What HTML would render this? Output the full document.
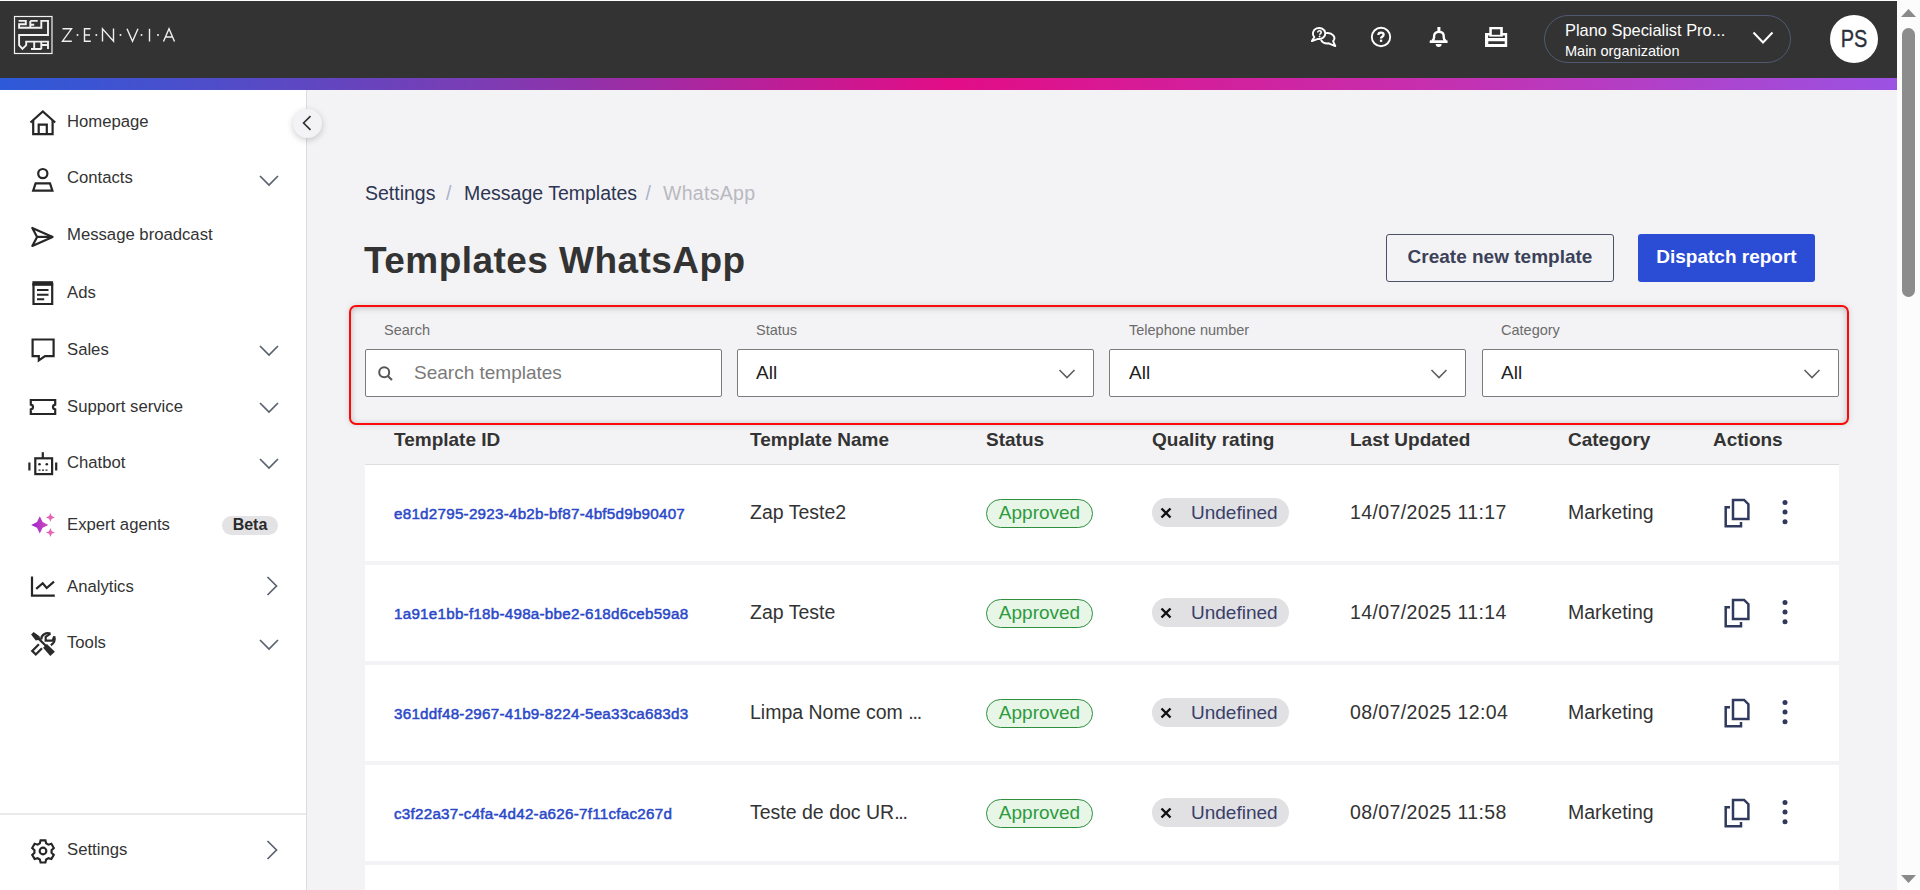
<!DOCTYPE html>
<html><head><meta charset="utf-8">
<style>
*{box-sizing:border-box;margin:0;padding:0}
html,body{width:1920px;height:890px;overflow:hidden;background:#fff;font-family:"Liberation Sans",sans-serif;color:#333}
.a{position:absolute}
#hdr{position:absolute;left:0;top:1px;width:1897px;height:77px;background:#333333}
#grad{position:absolute;left:0;top:78px;width:1897px;height:12px;background:linear-gradient(90deg,#2d5ad9 0%,#7a3db5 25%,#e20d86 50%,#c62fae 75%,#9b52e2 100%)}
#side{position:absolute;left:0;top:90px;width:307px;height:800px;background:#fff;border-right:1px solid #dcdce0}
#main{position:absolute;left:307px;top:90px;width:1590px;height:800px;background:#f3f3f5}
#sb{position:absolute;left:1897px;top:0;width:23px;height:890px;background:#fcfcfc}
.t{position:absolute;white-space:nowrap;line-height:1}
.nav{left:67px;font-size:16.7px;color:#333}
svg{position:absolute;overflow:visible}

.bc{font-size:19.5px}
.lbl{top:323px;font-size:14.5px;color:#6b6b6b}
.inp{top:349px;width:357px;height:48px;background:#fff;border:1px solid #7b7b7b;border-radius:2px}
.sel{top:363px;font-size:19px;color:#222}
.th{top:430px;font-size:19px;font-weight:bold;color:#333}
.row{left:365px;width:1474px;height:96px;background:#fff}
.tid{left:394px;letter-spacing:.25px;font-size:15.2px;color:#2a48c8;-webkit-text-stroke:.5px #2a48c8;margin-top:.6px}
.cell{font-size:19.5px;color:#333}
.dt{letter-spacing:.4px}
.appr{left:986px;width:107px;height:29px;border:1.3px solid #2f8f3f;border-radius:15px;background:#e8f6e8;color:#2e9a3e;font-size:19px;text-align:center;line-height:25px}
.undef{left:1152px;width:137px;height:29px;border-radius:15px;background:#e1e1e3;color:#39406a;font-size:19px;line-height:29px}
.undef span{position:absolute;left:39px;top:0}
</style></head><body>
<div id="hdr"></div>
<div id="grad"></div>
<div id="side"></div>
<div id="main"></div>
<div id="sb"></div>

<!-- HEADER -->
<svg class="a" style="left:0;top:0" width="200" height="70" viewBox="0 0 200 70">
 <g fill="none" stroke="#f2f2f2">
  <rect x="14.5" y="16.5" width="37.5" height="37" stroke-width="1.2"/>
  <g stroke-width="1.9" stroke-linejoin="miter">
   <path d="M18.6 20.9H25.8V24.2H19.1V27.7H41.3V20.9H48V35H19.1V45.2L22.4 48.9L26.2 45.2V41.6H48V49"/>
   <path d="M30.3 20.9H37.7M30.3 24.7H34.2M30.3 20.9V27.7"/>
   <path d="M31 49H41.5M34.2 41.6V49M41.3 41.6V49M41.3 45H48"/>
  </g>
 </g>
 <g fill="none" stroke="#f0f0f0" stroke-width="1.4">
  <path d="M62.5 28.8H71.5L62.5 41.2H71.8"/>
  <path d="M90.5 28.8H84.5V41.2H90.8M84.5 35H90"/>
  <path d="M102.5 41.5V28.8L113.5 41.2V28.5"/>
  <path d="M127 28.8L132.5 41.2L138 28.8"/>
  <path d="M149.5 28.8V41.5"/>
  <path d="M163.5 41.5L169 28.8L174.5 41.5M165.5 37H172.5"/>
 </g>
 <g fill="#f0f0f0">
  <circle cx="77.5" cy="35" r="1"/><circle cx="96.3" cy="35" r="1"/><circle cx="120.5" cy="35" r="1"/>
  <circle cx="141.5" cy="35" r="1"/><circle cx="158" cy="35" r="1"/>
 </g>
</svg>

<!-- header icons -->
<svg style="left:1300px;top:20px" width="220" height="36" viewBox="1300 20 220 36">
 <g fill="none" stroke="#fff" stroke-width="1.9" stroke-linejoin="round" stroke-linecap="round">
  <!-- chat bubbles -->
  <path d="M1314.35 37.04A6.2 5.5 0 1 1 1318.0 38.9L1311.9 41.1Z"/>
  <path d="M1326.3 33.1A6.8 5.2 0 0 1 1333.1 41.2L1335.3 46.1L1328.7 43.3A6.8 5.2 0 0 1 1321.3 40.4"/>
  <!-- help circle -->
  <circle cx="1381" cy="37" r="9.2"/>
  <path d="M1378.4 35c0-1.5 1.1-2.3 2.6-2.3s2.6.8 2.6 2.1c0 1.9-2.6 2-2.6 3.6" stroke-width="2.3" stroke-linecap="butt" stroke-linejoin="miter"/>
  <!-- bell -->
  <path d="M1432.2 41C1433.7 39.8 1434.1 38.8 1434.1 37.2V35.9C1434.1 33.4 1436.1 31.9 1438.9 31.9C1441.7 31.9 1443.7 33.4 1443.7 35.9V37.2C1443.7 38.8 1444.1 39.8 1445.6 41" stroke-width="2.4" stroke-linecap="butt"/>
 </g>
 <g fill="#fff">
  <path d="M1317.7 32.4c0-1 .8-1.6 1.8-1.6s1.8.6 1.8 1.5c0 1.2-1.7 1.3-1.7 2.5" stroke="#fff" stroke-width="1.5" fill="none"/>
  <circle cx="1319.6" cy="36.5" r=".9"/>
  <rect x="1379.9" y="39.6" width="2.3" height="2.3"/>
  <path d="M1435.7 44h5.9a2.95 2.95 0 0 1 -5.9 0z"/>
  <rect x="1437.4" y="27" width="3" height="4"/>
  <rect x="1429.7" y="40.3" width="17.9" height="2.8" rx=".6"/>
  <path fill-rule="evenodd" d="M1485 33H1507.2V47H1485Z M1488.1 35.4H1504.9V38.1H1488.1Z M1488.3 41.2H1504.7V44H1488.3Z"/>
  <rect x="1489.3" y="27" width="13.5" height="9.6"/>
  <rect x="1491.8" y="29.3" width="8.4" height="5.5" fill="#333"/>
 </g>
</svg>

<div class="a" style="left:1544px;top:15px;width:247px;height:48px;border:1px solid #4f5a72;border-radius:24px"></div>
<div class="t" id="org1" style="left:1565px;top:22px;font-size:16.4px;color:#fff">Plano Specialist Pro...</div>
<div class="t" id="org2" style="left:1565px;top:44px;font-size:14.5px;color:#fff">Main organization</div>
<svg style="left:1752px;top:31px" width="24" height="14" viewBox="0 0 24 14"><path d="M1.5 1.5L11 11.5L20.5 1.5" fill="none" stroke="#fff" stroke-width="2"/></svg>
<div class="a" style="left:1830px;top:15px;width:48px;height:48px;border-radius:50%;background:#fff"></div>
<div class="t" id="ps" style="left:1829.5px;top:28.3px;width:48px;text-align:center;font-size:23.5px;color:#2b2f3a;transform:scaleX(.85);-webkit-text-stroke:.35px #2b2f3a">PS</div>


<!-- SIDEBAR -->
<svg style="left:0;top:90px" width="307" height="800" viewBox="0 90 307 800">
 <g fill="none" stroke="#262626" stroke-width="2.2" stroke-linejoin="miter">
  <!-- home -->
  <path d="M30.5 122.5L42.8 111.5L55.2 122.5"/>
  <path d="M33.2 120V134.2H52.6V120"/>
  <path d="M38.7 134.2V124.6H46.8V134.2"/>
  <!-- person -->
  <circle cx="42.8" cy="173.6" r="4.6"/>
  <path d="M35.6 183.4H50L52.4 190.6H33.2Z"/>
  <!-- send -->
  <path d="M32.3 227.9L52.6 236.9L32.3 245.9L37.1 236.9Z" stroke-linejoin="round"/>
  <path d="M37.1 236.9H52.6"/>
  <!-- ads -->
  <path d="M33.5 283V304H52.2V283"/>
  <path d="M37 290H48.5M37 294.8H48.5M37 299.2H44.2" stroke-width="2"/>
  <!-- sales -->
  <path d="M32.6 339.5H53.6V356.2H45L38.8 360.5V356.2H32.6Z"/>
  <!-- ticket -->
  <path d="M30.8 400H55.2V404.6C53.8 404.8 53 405.8 53 407S53.8 409.2 55.2 409.4V414H30.8V409.4C32.2 409.2 33 408.2 33 407S32.2 404.8 30.8 404.6Z"/>
  <!-- chatbot -->
  <rect x="35.3" y="458.3" width="16.8" height="15.8"/>
  <path d="M42.8 452.2V458.3"/>
  <path d="M29.4 462.5V470.5M56.2 462.5V470.5"/>
  <path d="M38.5 470.2H40.5M42 470.2H44M45.5 470.2H47.5" stroke-width="1.3"/>
  <!-- analytics -->
  <path d="M32 576.5V595.6H54.8"/>
  <path d="M36.2 588.8L42.7 583.2L46.7 588L54 581.6"/>
  <!-- gear -->
 </g>
 <g fill="#262626">
  <rect x="32.4" y="281.2" width="20.7" height="4.6"/>
  <circle cx="39.5" cy="464.2" r="1.3"/><circle cx="46.8" cy="464.2" r="1.3"/>
 </g>
 <!-- tools -->
 <g fill="#2a2a2a">
  <path d="M31.1 634.4L33.6 631.9L39.5 636.3L40.3 639.6L35.8 640.6Z"/>
  <path d="M43.1 647.7L46.9 643.9L54.9 651.7L50.3 656.1Z"/>
 </g>
 <g fill="none" stroke="#2a2a2a" stroke-width="2.2">
  <path d="M38.6 638.6L46 646"/>
  <path d="M38.9 644.2L32.2 650.9L35.8 654.5L42 648.3"/>
  <path d="M50.4 633.6L45.7 636.8V640.6H52.6L54.2 636.4"/>
  <path d="M50.4 633.6C46.2 632 41 634.8 41.2 639.6" stroke-width="2.3"/>
  <path d="M54.2 636.4C55.6 640 53.8 643.6 50.8 645.2" stroke-width="2.3"/>
 </g>
 <!-- gear -->
 <g fill="none" stroke="#262626" stroke-width="2.3" transform="translate(43 851) scale(.93) translate(-42.8 -850)">
  <path d="M40.2 838.6h5.2l.8 3.2l2.4 1.4l3.2-.9l2.6 4.5l-2.4 2.3v2.8l2.4 2.3l-2.6 4.5l-3.2-.9l-2.4 1.4l-.8 3.2h-5.2l-.8-3.2l-2.4-1.4l-3.2.9l-2.6-4.5l2.4-2.3v-2.8l-2.4-2.3l2.6-4.5l3.2.9l2.4-1.4z"/>
  <circle cx="42.8" cy="850" r="3.6"/>
 </g>
 <!-- sparkles -->
 <defs>
  <linearGradient id="sp" gradientUnits="userSpaceOnUse" x1="31" y1="0" x2="49" y2="0"><stop offset="0" stop-color="#9b1fd0"/><stop offset="1" stop-color="#d452b8"/></linearGradient>
 </defs>
 <path d="M39.8 516.2L42.6 522.1L48.4 524.9L42.6 527.7L39.8 533.6L37 527.7L31.2 524.9L37 522.1Z" fill="url(#sp)"/>
 <path d="M50.4 513.1L51.7 516.1L54.9 517.4L51.7 518.7L50.4 521.8L49.1 518.7L45.9 517.4L49.1 516.1Z" fill="#e462b4"/>
 <path d="M50.4 528.1L51.7 531.2L54.9 532.5L51.7 533.8L50.4 536.9L49.1 533.8L45.9 532.5L49.1 531.2Z" fill="#e462b4"/>
 <!-- chevrons -->
 <g fill="none" stroke="#5a6270" stroke-width="1.7">
  <path d="M260 176L269 185L278 176"/>
  <path d="M260 346L269 355L278 346"/>
  <path d="M260 403L269 412L278 403"/>
  <path d="M260 459L269 468L278 459"/>
  <path d="M260 640L269 649L278 640"/>
  <path d="M267.5 577L276.5 586L267.5 595"/>
  <path d="M267.5 841L276.5 850L267.5 859"/>
 </g>
 <line x1="0" y1="814" x2="306" y2="814" stroke="#d8d8dc" stroke-width="1.2"/>
</svg>
<div class="a" style="left:222px;top:516px;width:56px;height:19px;border-radius:10px;background:#e3e3e6"></div>
<div class="t" style="left:222px;top:517px;width:56px;text-align:center;font-size:16px;font-weight:bold;color:#2b2b2b">Beta</div>
<div class="t nav" style="top:114px">Homepage</div>
<div class="t nav" style="top:170px">Contacts</div>
<div class="t nav" style="top:227px">Message broadcast</div>
<div class="t nav" style="top:285px">Ads</div>
<div class="t nav" style="top:342px">Sales</div>
<div class="t nav" style="top:399px">Support service</div>
<div class="t nav" style="top:455px">Chatbot</div>
<div class="t nav" style="top:517px">Expert agents</div>
<div class="t nav" style="top:579px">Analytics</div>
<div class="t nav" style="top:635px">Tools</div>
<div class="t nav" style="top:842px">Settings</div>
<!-- collapse btn -->
<div class="a" style="left:293px;top:109px;width:29px;height:29px;border-radius:50%;background:#f3f3f5;box-shadow:0 2px 7px rgba(0,0,0,.2)"></div>
<svg style="left:300px;top:114.5px" width="16" height="16" viewBox="0 0 16 16"><path d="M10.5 1.2L3.6 8L10.5 14.8" fill="none" stroke="#333" stroke-width="1.7"/></svg>


<!-- MAIN -->
<div class="t bc" style="left:365px;top:184px;color:#2d3552">Settings</div>
<div class="t bc" style="left:446px;top:184px;color:#a9b3c7">/</div>
<div class="t bc" style="left:464px;top:184px;color:#2d3552">Message Templates</div>
<div class="t bc" style="left:645.5px;top:184px;color:#a9b3c7">/</div>
<div class="t bc" style="left:663px;top:184px;letter-spacing:.3px;color:#b9b9c0">WhatsApp</div>
<div class="t" id="title" style="left:364px;top:242px;letter-spacing:.45px;font-size:37px;font-weight:bold;color:#333">Templates WhatsApp</div>
<div class="a" style="left:1386px;top:234px;width:228px;height:48px;border:1.5px solid #4b5166;border-radius:3px"></div>
<div class="t" id="b1" style="left:1386px;top:247px;width:228px;text-align:center;font-size:19px;font-weight:bold;color:#3b4158">Create new template</div>
<div class="a" style="left:1638px;top:234px;width:177px;height:48px;background:#2b4dd6;border-radius:3px"></div>
<div class="t" id="b2" style="left:1638px;top:247px;width:177px;text-align:center;font-size:19px;font-weight:bold;color:#fff">Dispatch report</div>

<div class="a" style="left:349px;top:304.5px;width:1500px;height:120.3px;border:2.2px solid #fa0a0a;border-radius:7px;box-shadow:inset 0 1px 6px rgba(0,0,0,.24),0 0 6px rgba(0,0,0,.12)"></div>
<div class="t lbl" style="left:384px">Search</div>
<div class="t lbl" style="left:756px">Status</div>
<div class="t lbl" style="left:1129px">Telephone number</div>
<div class="t lbl" style="left:1501px">Category</div>
<div class="a inp" style="left:365px"></div>
<div class="a inp" style="left:737px"></div>
<div class="a inp" style="left:1109px"></div>
<div class="a inp" style="left:1482px"></div>
<svg style="left:377px;top:365px" width="18" height="18" viewBox="0 0 18 18"><g fill="none" stroke="#555" stroke-width="2"><circle cx="7.2" cy="7.3" r="5"/><path d="M11 11.2L15 15"/></g></svg>
<div class="t" style="left:414px;top:363px;font-size:19px;color:#7a7a7a">Search templates</div>
<div class="t sel" style="left:756px">All</div>
<div class="t sel" style="left:1129px">All</div>
<div class="t sel" style="left:1501px">All</div>
<svg style="left:1058px;top:368px" width="18" height="12" viewBox="0 0 18 12"><path d="M1.5 2L9 9.5L16.5 2" fill="none" stroke="#5f5f5f" stroke-width="1.6"/></svg>
<svg style="left:1430px;top:368px" width="18" height="12" viewBox="0 0 18 12"><path d="M1.5 2L9 9.5L16.5 2" fill="none" stroke="#5f5f5f" stroke-width="1.6"/></svg>
<svg style="left:1803px;top:368px" width="18" height="12" viewBox="0 0 18 12"><path d="M1.5 2L9 9.5L16.5 2" fill="none" stroke="#5f5f5f" stroke-width="1.6"/></svg>

<div class="t th" style="left:394px">Template ID</div>
<div class="t th" style="left:750px">Template Name</div>
<div class="t th" style="left:986px">Status</div>
<div class="t th" style="left:1152px">Quality rating</div>
<div class="t th" style="left:1350px">Last Updated</div>
<div class="t th" style="left:1568px">Category</div>
<div class="t th" style="left:1713px">Actions</div>
<div class="a" style="left:365px;top:464px;width:1474px;height:1px;background:#dedee2"></div>
<div class="a row" style="top:465px"></div>
<div class="t tid" style="top:505px">e81d2795-2923-4b2b-bf87-4bf5d9b90407</div>
<div class="t cell" style="left:750px;top:503px">Zap Teste2</div>
<div class="a appr" style="top:499px">Approved</div>
<div class="a undef" style="top:498px"><svg style="left:8px;top:8.5px" width="12" height="12" viewBox="0 0 12 12"><path d="M1.5 1.5L10.5 10.5M10.5 1.5L1.5 10.5" stroke="#111" stroke-width="2.4"/></svg><span>Undefined</span></div>
<div class="t cell dt" style="left:1350px;top:503px">14/07/2025 11:17</div>
<div class="t cell" style="left:1568px;top:503px">Marketing</div>
<svg style="left:1722px;top:498px" width="30" height="30" viewBox="0 0 30 30"><g fill="none" stroke="#2f3a5e" stroke-width="2.5" stroke-linejoin="miter"><path d="M8 9.3H3.7V28.3H19V24"/><path d="M11 1.9H22.1L26.4 6.2V20.9H11Z"/></g></svg>
<svg style="left:1778px;top:499px" width="14" height="28" viewBox="0 0 14 28"><g fill="#2f3a5e"><circle cx="7" cy="3.4" r="2.5"/><circle cx="7" cy="13.1" r="2.5"/><circle cx="7" cy="22.7" r="2.5"/></g></svg>
<div class="a row" style="top:565px"></div>
<div class="t tid" style="top:605px">1a91e1bb-f18b-498a-bbe2-618d6ceb59a8</div>
<div class="t cell" style="left:750px;top:603px">Zap Teste</div>
<div class="a appr" style="top:599px">Approved</div>
<div class="a undef" style="top:598px"><svg style="left:8px;top:8.5px" width="12" height="12" viewBox="0 0 12 12"><path d="M1.5 1.5L10.5 10.5M10.5 1.5L1.5 10.5" stroke="#111" stroke-width="2.4"/></svg><span>Undefined</span></div>
<div class="t cell dt" style="left:1350px;top:603px">14/07/2025 11:14</div>
<div class="t cell" style="left:1568px;top:603px">Marketing</div>
<svg style="left:1722px;top:598px" width="30" height="30" viewBox="0 0 30 30"><g fill="none" stroke="#2f3a5e" stroke-width="2.5" stroke-linejoin="miter"><path d="M8 9.3H3.7V28.3H19V24"/><path d="M11 1.9H22.1L26.4 6.2V20.9H11Z"/></g></svg>
<svg style="left:1778px;top:599px" width="14" height="28" viewBox="0 0 14 28"><g fill="#2f3a5e"><circle cx="7" cy="3.4" r="2.5"/><circle cx="7" cy="13.1" r="2.5"/><circle cx="7" cy="22.7" r="2.5"/></g></svg>
<div class="a row" style="top:665px"></div>
<div class="t tid" style="top:705px">361ddf48-2967-41b9-8224-5ea33ca683d3</div>
<div class="t cell" style="left:750px;top:703px">Limpa Nome com <span style="letter-spacing:-1.2px">...</span></div>
<div class="a appr" style="top:699px">Approved</div>
<div class="a undef" style="top:698px"><svg style="left:8px;top:8.5px" width="12" height="12" viewBox="0 0 12 12"><path d="M1.5 1.5L10.5 10.5M10.5 1.5L1.5 10.5" stroke="#111" stroke-width="2.4"/></svg><span>Undefined</span></div>
<div class="t cell dt" style="left:1350px;top:703px">08/07/2025 12:04</div>
<div class="t cell" style="left:1568px;top:703px">Marketing</div>
<svg style="left:1722px;top:698px" width="30" height="30" viewBox="0 0 30 30"><g fill="none" stroke="#2f3a5e" stroke-width="2.5" stroke-linejoin="miter"><path d="M8 9.3H3.7V28.3H19V24"/><path d="M11 1.9H22.1L26.4 6.2V20.9H11Z"/></g></svg>
<svg style="left:1778px;top:699px" width="14" height="28" viewBox="0 0 14 28"><g fill="#2f3a5e"><circle cx="7" cy="3.4" r="2.5"/><circle cx="7" cy="13.1" r="2.5"/><circle cx="7" cy="22.7" r="2.5"/></g></svg>
<div class="a row" style="top:765px"></div>
<div class="t tid" style="top:805px">c3f22a37-c4fa-4d42-a626-7f11cfac267d</div>
<div class="t cell" style="left:750px;top:803px">Teste de doc UR<span style="letter-spacing:-1.2px">...</span></div>
<div class="a appr" style="top:799px">Approved</div>
<div class="a undef" style="top:798px"><svg style="left:8px;top:8.5px" width="12" height="12" viewBox="0 0 12 12"><path d="M1.5 1.5L10.5 10.5M10.5 1.5L1.5 10.5" stroke="#111" stroke-width="2.4"/></svg><span>Undefined</span></div>
<div class="t cell dt" style="left:1350px;top:803px">08/07/2025 11:58</div>
<div class="t cell" style="left:1568px;top:803px">Marketing</div>
<svg style="left:1722px;top:798px" width="30" height="30" viewBox="0 0 30 30"><g fill="none" stroke="#2f3a5e" stroke-width="2.5" stroke-linejoin="miter"><path d="M8 9.3H3.7V28.3H19V24"/><path d="M11 1.9H22.1L26.4 6.2V20.9H11Z"/></g></svg>
<svg style="left:1778px;top:799px" width="14" height="28" viewBox="0 0 14 28"><g fill="#2f3a5e"><circle cx="7" cy="3.4" r="2.5"/><circle cx="7" cy="13.1" r="2.5"/><circle cx="7" cy="22.7" r="2.5"/></g></svg>
<div class="a row" style="top:865px"></div>

<!-- SCROLLBAR -->
<svg style="left:1897px;top:0" width="23" height="890" viewBox="0 0 23 890">
 <path d="M4 17H19L11.5 9Z" fill="#8a8a8a"/>
 <rect x="5" y="28" width="13" height="269" rx="6.5" fill="#8c8c8c"/>
 <path d="M4 875H19L11.5 883Z" fill="#8a8a8a"/>
</svg>

</body></html>
